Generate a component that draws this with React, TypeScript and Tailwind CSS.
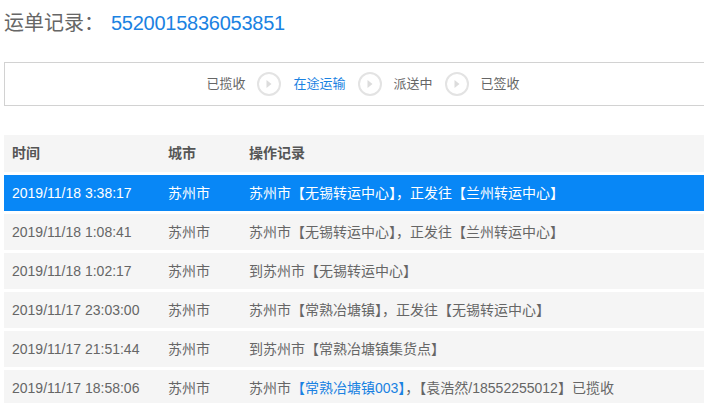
const rows = [
  { time: "2019/11/18 3:38:17", city: "苏州市", op: "苏州市【无锡转运中心】，正发往【兰州转运中心】", active: true },
  { time: "2019/11/18 1:08:41", city: "苏州市", op: "苏州市【无锡转运中心】，正发往【兰州转运中心】" },
  { time: "2019/11/18 1:02:17", city: "苏州市", op: "到苏州市【无锡转运中心】" },
  { time: "2019/11/17 23:03:00", city: "苏州市", op: "苏州市【常熟冶塘镇】，正发往【无锡转运中心】" },
  { time: "2019/11/17 21:51:44", city: "苏州市", op: "到苏州市【常熟冶塘镇集货点】" },
  { time: "2019/11/17 18:58:06", city: "苏州市", op: null },
];

function StepArrow() {
  return (
    <span className="flex h-[24px] w-[24px] items-center justify-center rounded-full border-2 border-[#e3e3e3] bg-white">
      <svg width="8" height="10" viewBox="0 0 8 10">
        <path d="M1.5 1 L6.5 5 L1.5 9 Z" fill="#dcdcdc" />
      </svg>
    </span>
  );
}

export default function App() {
  return (
    <div
      className="h-[403px] w-[704px] overflow-hidden bg-white"
      style={{ fontFamily: '"Liberation Sans", "Noto Sans CJK SC", sans-serif' }}
    >
      <div className="flex h-[44px] items-center pl-[4px] pt-[1px] text-[20px]">
        <span className="text-[#666]">运单记录：</span>
        <span className="ml-[7px] tracking-[-0.25px] text-[#1a82e2]">5520015836053851</span>
      </div>

      <div className="ml-[4px] mt-[18px] flex h-[44px] w-[720px] items-center justify-center border border-[#d2d2d2] pr-[2px] text-[13px] text-[#666]">
        <div className="flex items-center gap-[12px]">
          <span>已揽收</span>
          <StepArrow />
          <span className="text-[#1a82e2]">在途运输</span>
          <StepArrow />
          <span>派送中</span>
          <StepArrow />
          <span>已签收</span>
        </div>
      </div>

      <div className="ml-[4px] mt-[29px] flex w-[720px] flex-col gap-[3px] text-[14px]">
        <div className="flex h-[37px] items-center bg-[#f5f5f5] font-bold text-[#555]">
          <span className="w-[164px] pl-[8px]">时间</span>
          <span className="w-[81px]">城市</span>
          <span>操作记录</span>
        </div>
        {rows.map((r) => (
          <div
            key={r.time}
            className={
              r.active
                ? "flex h-[36px] items-center bg-[#0887f6] text-white"
                : "flex h-[36px] items-center bg-[#f5f5f5] text-[#666]"
            }
          >
            <span className="w-[164px] pl-[8px]">{r.time}</span>
            <span className="w-[81px]">{r.city}</span>
            {r.op ? (
              <span>{r.op}</span>
            ) : (
              <span>
                苏州市<span className="text-[#1a82e2]">【常熟冶塘镇003】</span>，【袁浩然/18552255012】已揽收
              </span>
            )}
          </div>
        ))}
      </div>
    </div>
  );
}
